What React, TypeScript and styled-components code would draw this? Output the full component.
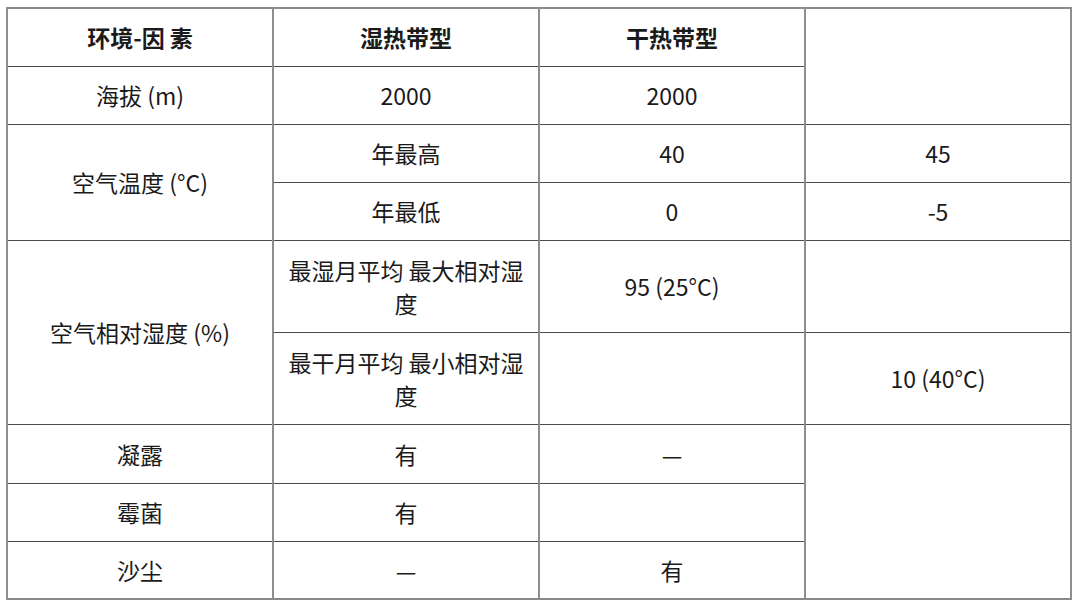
import styled, { createGlobalStyle } from "styled-components"

const GlobalStyle = createGlobalStyle`
  html, body {
    margin: 0;
    padding: 0;
    background: #ffffff;
  }
  body {
    font-family: "Noto Sans CJK SC", "Noto Sans", sans-serif;
    color: #1a1a1a;
  }
`

const Page = styled.div`
  width: 1080px;
  height: 604px;
  box-sizing: border-box;
  padding: 7px 10px 0 6px;
  background: #ffffff;
`

const Table = styled.table`
  width: 1064px;
  table-layout: fixed;
  border-collapse: collapse;
  border: 2px solid #8a8a8a;
`

const Cell = styled.td<{ $bold?: boolean; $h?: number }>`
  border-top: 1px solid #4a4a4a;
  border-bottom: 1px solid #4a4a4a;
  border-left: 2px solid #8e8e8e;
  border-right: 2px solid #8e8e8e;
  height: ${(p) => p.$h ?? 58}px;
  box-sizing: border-box;
  padding: 1px 12px 0;
  text-align: center;
  vertical-align: middle;
  font-size: 23px;
  line-height: 33px;
  font-weight: ${(p) => (p.$bold ? 700 : 400)};
  color: #1a1a1a;
`

const TALL = 92

const App = () => {
  return (
    <Page>
      <GlobalStyle />
      <Table>
        <colgroup>
          <col style={{ width: 266 }} />
          <col style={{ width: 266 }} />
          <col style={{ width: 266 }} />
          <col style={{ width: 266 }} />
        </colgroup>
        <tbody>
          <tr>
            <Cell $bold>环境-因 素</Cell>
            <Cell $bold>湿热带型</Cell>
            <Cell $bold>干热带型</Cell>
            <Cell rowSpan={2}></Cell>
          </tr>
          <tr>
            <Cell>海拔 (m)</Cell>
            <Cell>2000</Cell>
            <Cell>2000</Cell>
          </tr>
          <tr>
            <Cell rowSpan={2}>空气温度 (°C)</Cell>
            <Cell>年最高</Cell>
            <Cell>40</Cell>
            <Cell>45</Cell>
          </tr>
          <tr>
            <Cell>年最低</Cell>
            <Cell>0</Cell>
            <Cell>-5</Cell>
          </tr>
          <tr>
            <Cell rowSpan={2}>空气相对湿度 (%)</Cell>
            <Cell $h={TALL}>最湿月平均 最大相对湿度</Cell>
            <Cell $h={TALL}>95 (25°C)</Cell>
            <Cell $h={TALL}></Cell>
          </tr>
          <tr>
            <Cell $h={TALL}>最干月平均 最小相对湿度</Cell>
            <Cell $h={TALL}></Cell>
            <Cell $h={TALL}>10 (40°C)</Cell>
          </tr>
          <tr>
            <Cell $h={59}>凝露</Cell>
            <Cell $h={59}>有</Cell>
            <Cell $h={59}>—</Cell>
            <Cell rowSpan={3}></Cell>
          </tr>
          <tr>
            <Cell>霉菌</Cell>
            <Cell>有</Cell>
            <Cell></Cell>
          </tr>
          <tr>
            <Cell>沙尘</Cell>
            <Cell>—</Cell>
            <Cell>有</Cell>
          </tr>
        </tbody>
      </Table>
    </Page>
  )
}

export default App
